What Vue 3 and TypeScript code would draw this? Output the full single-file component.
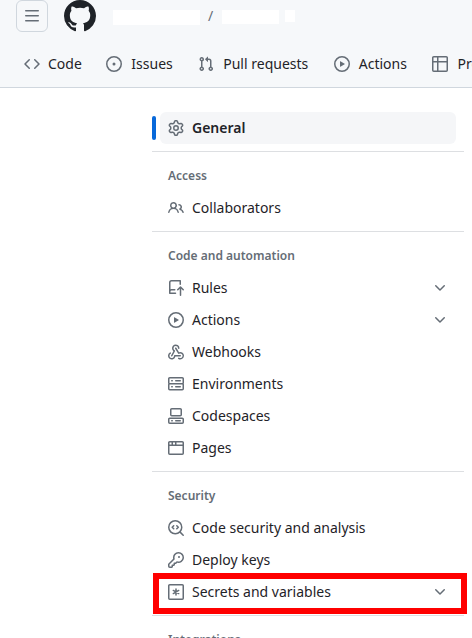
<script setup lang="ts">
interface Icon { fill?: string; stroke?: string }
interface Item { label: string; icon: string; expandable?: boolean; active?: boolean; marked?: boolean }
interface Group { title?: string; items: Item[] }

const icons: Record<string, Icon> = {
  menu: { fill: 'M1 2.75A.75.75 0 0 1 1.75 2h12.5a.75.75 0 0 1 0 1.5H1.75A.75.75 0 0 1 1 2.75Zm0 5A.75.75 0 0 1 1.75 7h12.5a.75.75 0 0 1 0 1.5H1.75A.75.75 0 0 1 1 7.75ZM1.75 12h12.5a.75.75 0 0 1 0 1.5H1.75a.75.75 0 0 1 0-1.5Z' },
  logo: { fill: 'M8 0c4.42 0 8 3.58 8 8a8.013 8.013 0 0 1-5.45 7.59c-.4.08-.55-.17-.55-.38 0-.27.01-1.13.01-2.2 0-.75-.25-1.23-.54-1.48 1.78-.2 3.65-.88 3.65-3.95 0-.88-.31-1.59-.82-2.15.08-.2.36-1.02-.08-2.12 0 0-.67-.22-2.2.82-.64-.18-1.32-.27-2-.27-.68 0-1.36.09-2 .27-1.53-1.03-2.2-.82-2.2-.82-.44 1.1-.16 1.92-.08 2.12-.51.56-.82 1.28-.82 2.15 0 3.06 1.86 3.75 3.64 3.95-.23.2-.44.55-.51 1.07-.46.21-1.61.55-2.33-.66-.15-.24-.6-.83-1.23-.82-.67.01-.27.38.01.53.34.19.73.9.82 1.13.16.45.68 1.31 2.69.94 0 .67.01 1.3.01 1.49 0 .21-.15.45-.55.38A7.995 7.995 0 0 1 0 8c0-4.42 3.58-8 8-8Z' },
  code: { fill: 'm11.28 3.22 4.25 4.25a.75.75 0 0 1 0 1.06l-4.25 4.25a.749.749 0 0 1-1.275-.326.749.749 0 0 1 .215-.734L13.94 8l-3.72-3.72a.749.749 0 0 1 .326-1.275.749.749 0 0 1 .734.215Zm-6.56 0a.751.751 0 0 1 1.042.018.751.751 0 0 1 .018 1.042L2.06 8l3.72 3.72a.749.749 0 0 1-.326 1.275.749.749 0 0 1-.734-.215L.47 8.53a.75.75 0 0 1 0-1.06Z' },
  issue: { fill: 'M8 9.5a1.5 1.5 0 1 0 0-3 1.5 1.5 0 0 0 0 3Z M8 0a8 8 0 1 1 0 16A8 8 0 0 1 8 0ZM1.5 8a6.5 6.5 0 1 0 13 0 6.5 6.5 0 0 0-13 0Z' },
  pull: { fill: 'M1.5 3.25a2.25 2.25 0 1 1 3 2.122v5.256a2.251 2.251 0 1 1-1.5 0V5.372A2.25 2.25 0 0 1 1.5 3.25Zm5.677-.177L9.573.677A.25.25 0 0 1 10 .854V2.5h1A2.5 2.5 0 0 1 13.5 5v5.628a2.251 2.251 0 1 1-1.5 0V5a1 1 0 0 0-1-1h-1v1.646a.25.25 0 0 1-.427.177L7.177 3.427a.25.25 0 0 1 0-.354ZM3.75 2.5a.75.75 0 1 0 0 1.5.75.75 0 0 0 0-1.5Zm0 9.5a.75.75 0 1 0 0 1.5.75.75 0 0 0 0-1.5Zm8.25.75a.75.75 0 1 0 1.5 0 .75.75 0 0 0-1.5 0Z' },
  play: { fill: 'M8 0a8 8 0 1 1 0 16A8 8 0 0 1 8 0ZM1.5 8a6.5 6.5 0 1 0 13 0 6.5 6.5 0 0 0-13 0Zm4.879-2.773 4.264 2.559a.25.25 0 0 1 0 .428l-4.264 2.559A.25.25 0 0 1 6 10.559V5.442a.25.25 0 0 1 .379-.215Z' },
  table: { fill: 'M0 1.75C0 .784.784 0 1.75 0h12.5C15.216 0 16 .784 16 1.75v12.5A1.75 1.75 0 0 1 14.25 16H1.75A1.75 1.75 0 0 1 0 14.25ZM6.5 6.5v8h7.75a.25.25 0 0 0 .25-.25V6.5Zm8-1.5V1.75a.25.25 0 0 0-.25-.25H6.5V5Zm-13 1.5v7.75c0 .138.112.25.25.25H5v-8ZM5 5V1.5H1.75a.25.25 0 0 0-.25.25V5Z' },
  gear: { fill: 'M8 0a8.2 8.2 0 0 1 .701.031C9.444.095 9.99.645 10.16 1.29l.288 1.107c.018.066.079.158.212.224.231.114.454.243.668.386.123.082.233.09.299.071l1.103-.303c.644-.176 1.392.021 1.82.63.27.385.506.792.704 1.218.315.675.111 1.422-.364 1.891l-.814.806c-.049.048-.098.147-.088.294.016.257.016.515 0 .772-.01.147.038.246.088.294l.814.806c.475.469.679 1.216.364 1.891a7.977 7.977 0 0 1-.704 1.217c-.428.61-1.176.807-1.82.63l-1.102-.302c-.067-.019-.177-.011-.3.071a5.909 5.909 0 0 1-.668.386c-.133.066-.194.158-.211.224l-.29 1.106c-.168.646-.715 1.196-1.458 1.26a8.006 8.006 0 0 1-1.402 0c-.743-.064-1.289-.614-1.458-1.26l-.289-1.106c-.018-.066-.079-.158-.212-.224a5.738 5.738 0 0 1-.668-.386c-.123-.082-.233-.09-.299-.071l-1.103.303c-.644.176-1.392-.021-1.82-.63a8.12 8.12 0 0 1-.704-1.218c-.315-.675-.111-1.422.363-1.891l.815-.806c.05-.048.098-.147.088-.294a6.214 6.214 0 0 1 0-.772c.01-.147-.038-.246-.088-.294l-.815-.806C.635 6.045.431 5.298.746 4.623a7.92 7.92 0 0 1 .704-1.217c.428-.61 1.176-.807 1.82-.63l1.102.302c.067.019.177.011.3-.071.214-.143.437-.272.668-.386.133-.066.194-.158.211-.224l.29-1.106C6.009.645 6.556.095 7.299.03 7.53.01 7.764 0 8 0Zm-.571 1.525c-.036.003-.108.036-.137.146l-.289 1.105c-.147.561-.549.967-.998 1.189-.173.086-.34.183-.5.29-.417.278-.97.423-1.529.27l-1.103-.303c-.109-.03-.175.016-.195.045-.22.312-.412.644-.573.99-.014.031-.021.11.059.19l.815.806c.411.406.562.957.53 1.456a4.709 4.709 0 0 0 0 .582c.032.499-.119 1.05-.53 1.456l-.815.806c-.081.08-.073.159-.059.19.162.346.353.677.573.989.02.03.085.076.195.046l1.102-.303c.56-.153 1.113-.008 1.53.27.161.107.328.204.501.29.447.222.85.629.997 1.189l.289 1.105c.029.109.101.143.137.146a6.6 6.6 0 0 0 1.142 0c.036-.003.108-.036.137-.146l.289-1.105c.147-.561.549-.967.998-1.189.173-.086.34-.183.5-.29.417-.278.97-.423 1.529-.27l1.103.303c.109.029.175-.016.195-.045.22-.313.411-.644.573-.99.014-.031.021-.11-.059-.19l-.815-.806c-.411-.406-.562-.957-.53-1.456a4.709 4.709 0 0 0 0-.582c-.032-.499.119-1.05.53-1.456l.815-.806c.081-.08.073-.159.059-.19a6.464 6.464 0 0 0-.573-.989c-.02-.03-.085-.076-.195-.046l-1.102.303c-.56.153-1.113.008-1.53-.27a4.44 4.44 0 0 0-.501-.29c-.447-.222-.85-.629-.997-1.189l-.289-1.105c-.029-.11-.101-.143-.137-.146a6.6 6.6 0 0 0-1.142 0ZM11 8a3 3 0 1 1-6 0 3 3 0 0 1 6 0ZM9.5 8a1.5 1.5 0 1 0-3.001.001A1.5 1.5 0 0 0 9.5 8Z' },
  people: { fill: 'M2 5.5a3.5 3.5 0 1 1 5.898 2.549 5.508 5.508 0 0 1 3.034 4.084.75.75 0 1 1-1.482.235 4 4 0 0 0-7.9 0 .75.75 0 0 1-1.482-.236A5.507 5.507 0 0 1 3.102 8.05 3.493 3.493 0 0 1 2 5.5ZM11 4a3.001 3.001 0 0 1 2.22 5.018 5.01 5.01 0 0 1 2.56 3.012.749.749 0 0 1-.885.954.752.752 0 0 1-.549-.514 3.507 3.507 0 0 0-2.522-2.372.75.75 0 0 1-.574-.73v-.352a.75.75 0 0 1 .416-.672A1.5 1.5 0 0 0 11 5.5.75.75 0 0 1 11 4Zm-5.5-.5a2 2 0 1 0-.001 3.999A2 2 0 0 0 5.5 3.5Z' },
  rules: { fill: 'M1 2.5A2.5 2.5 0 0 1 3.5 0h8.75a.75.75 0 0 1 .75.75v3.5a.75.75 0 0 1-1.5 0V1.5h-8a1 1 0 0 0-1 1v6.708A2.493 2.493 0 0 1 3.5 9h3.25a.75.75 0 0 1 0 1.5H3.5a1 1 0 0 0-1 1v1h5a.75.75 0 0 1 0 1.5H1.75a.75.75 0 0 1-.75-.75Zm13.73 7.79-1.48-1.47v6.43a.75.75 0 0 1-1.5 0V8.82l-1.47 1.47a.75.75 0 0 1-1.06-1.06l2.75-2.75a.75.75 0 0 1 1.06 0l2.75 2.75a.75.75 0 0 1-1.05 1.06Z' },
  webhook: { fill: 'M5.5 4.25a2.25 2.25 0 0 1 4.5 0 .75.75 0 0 0 1.5 0 3.75 3.75 0 1 0-6.14 2.889l-2.272 4.258a.75.75 0 0 0 1.324.706L7 7.25a.75.75 0 0 0-.309-1.015A2.25 2.25 0 0 1 5.5 4.25Z M7.364 3.607a.75.75 0 0 1 1.03.257l2.608 4.349a3.75 3.75 0 1 1-.628 6.785.75.75 0 0 1 .752-1.299 2.25 2.25 0 1 0-.033-3.88.75.75 0 0 1-1.03-.256L7.107 4.636a.75.75 0 0 1 .257-1.03Z M2.9 8.776A.75.75 0 0 1 2.625 9.8 2.25 2.25 0 1 0 6 11.75a.75.75 0 0 1 .75-.751h5.5a.75.75 0 0 1 0 1.5H7.425a3.751 3.751 0 1 1-5.55-3.998.75.75 0 0 1 1.024.274Z' },
  server: { fill: 'M1.75 1h12.5c.966 0 1.75.784 1.75 1.75v4c0 .372-.116.717-.314 1 .198.283.314.628.314 1v4a1.75 1.75 0 0 1-1.75 1.75H1.75A1.75 1.75 0 0 1 0 12.75v-4c0-.358.109-.707.314-1a1.739 1.739 0 0 1-.314-1v-4C0 1.784.784 1 1.75 1ZM1.5 2.75v4c0 .138.112.25.25.25h12.5a.25.25 0 0 0 .25-.25v-4a.25.25 0 0 0-.25-.25H1.75a.25.25 0 0 0-.25.25Zm.25 5.75a.25.25 0 0 0-.25.25v4c0 .138.112.25.25.25h12.5a.25.25 0 0 0 .25-.25v-4a.25.25 0 0 0-.25-.25ZM7 4.75A.75.75 0 0 1 7.75 4h4.5a.75.75 0 0 1 0 1.5h-4.5A.75.75 0 0 1 7 4.75ZM7.75 10h4.5a.75.75 0 0 1 0 1.5h-4.5a.75.75 0 0 1 0-1.5ZM3 4.75A.75.75 0 0 1 3.75 4h.5a.75.75 0 0 1 0 1.5h-.5A.75.75 0 0 1 3 4.75ZM3.75 10h.5a.75.75 0 0 1 0 1.5h-.5a.75.75 0 0 1 0-1.5Z' },
  codespaces: { fill: 'M0 11.25c0-.966.784-1.75 1.75-1.75h12.5c.966 0 1.75.784 1.75 1.75v3A1.75 1.75 0 0 1 14.25 16H1.75A1.75 1.75 0 0 1 0 14.25Zm2-9.5C2 .784 2.784 0 3.75 0h8.5C13.216 0 14 .784 14 1.75v5a1.75 1.75 0 0 1-1.75 1.75h-8.5A1.75 1.75 0 0 1 2 6.75Zm1.75-.25a.25.25 0 0 0-.25.25v5c0 .138.112.25.25.25h8.5a.25.25 0 0 0 .25-.25v-5a.25.25 0 0 0-.25-.25Zm-2 9.5a.25.25 0 0 0-.25.25v3c0 .138.112.25.25.25h12.5a.25.25 0 0 0 .25-.25v-3a.25.25 0 0 0-.25-.25ZM7 12.75a.75.75 0 0 1 .75-.75h4.5a.75.75 0 0 1 0 1.5h-4.5a.75.75 0 0 1-.75-.75Zm-4 0a.75.75 0 0 1 .75-.75h.5a.75.75 0 0 1 0 1.5h-.5a.75.75 0 0 1-.75-.75Z' },
  browser: { fill: 'M0 2.75C0 1.784.784 1 1.75 1h12.5c.966 0 1.75.784 1.75 1.75v10.5A1.75 1.75 0 0 1 14.25 15H1.75A1.75 1.75 0 0 1 0 13.25ZM14.5 6h-13v7.25c0 .138.112.25.25.25h12.5a.25.25 0 0 0 .25-.25Zm-6-3.5v2h6V2.75a.25.25 0 0 0-.25-.25ZM5 2.5v2h2v-2Zm-3.25 0a.25.25 0 0 0-.25.25V4.5h2v-2Z' },
  codescan: { stroke: 'M12.1 12.1 15.2 15.2M13.75 7.25a6.5 6.5 0 1 1-13 0 6.5 6.5 0 0 1 13 0ZM5.7 5.7 4.2 7.25 5.7 8.8M8.8 5.7l1.5 1.55L8.8 8.8' },
  key: { fill: 'M10.5 0a5.499 5.499 0 1 1-1.288 10.848l-.932.932a.749.749 0 0 1-.53.22H7v.75a.749.749 0 0 1-.22.53l-.5.5a.749.749 0 0 1-.53.22H5v.75a.749.749 0 0 1-.22.53l-.5.5a.749.749 0 0 1-.53.22h-2A1.75 1.75 0 0 1 0 14.25v-2c0-.199.079-.389.22-.53l4.932-4.932A5.5 5.5 0 0 1 10.5 0Zm-4 5.5c-.001.431.069.86.205 1.269a.75.75 0 0 1-.181.768L1.5 12.56v1.69c0 .138.112.25.25.25h1.69l.06-.06v-1.19a.75.75 0 0 1 .75-.75h1.19l.06-.06v-1.19a.75.75 0 0 1 .75-.75h1.19l1.023-1.025a.75.75 0 0 1 .768-.18A4 4 0 1 0 6.5 5.5ZM11 6a1 1 0 1 1 0-2 1 1 0 0 1 0 2Z' },
  secret: { stroke: 'M1.75.75h12.5a1 1 0 0 1 1 1v12.5a1 1 0 0 1-1 1H1.75a1 1 0 0 1-1-1V1.75a1 1 0 0 1 1-1ZM8 5v6M5.3 6.45l5.4 3.1M5.3 9.55l5.4-3.1' },
  chevron: { fill: 'M12.78 5.22a.749.749 0 0 1 0 1.06l-4.25 4.25a.749.749 0 0 1-1.06 0L3.22 6.28a.749.749 0 1 1 1.06-1.06L8 8.939l3.72-3.719a.749.749 0 0 1 1.06 0Z' },
}

const tabs: Item[] = [
  { label: 'Code', icon: 'code' },
  { label: 'Issues', icon: 'issue' },
  { label: 'Pull requests', icon: 'pull' },
  { label: 'Actions', icon: 'play' },
  { label: 'Projects', icon: 'table' },
]

const groups: Group[] = [
  { items: [{ label: 'General', icon: 'gear', active: true }] },
  { title: 'Access', items: [{ label: 'Collaborators', icon: 'people' }] },
  {
    title: 'Code and automation',
    items: [
      { label: 'Rules', icon: 'rules', expandable: true },
      { label: 'Actions', icon: 'play', expandable: true },
      { label: 'Webhooks', icon: 'webhook' },
      { label: 'Environments', icon: 'server' },
      { label: 'Codespaces', icon: 'codespaces' },
      { label: 'Pages', icon: 'browser' },
    ],
  },
  {
    title: 'Security',
    items: [
      { label: 'Code security and analysis', icon: 'codescan' },
      { label: 'Deploy keys', icon: 'key' },
      { label: 'Secrets and variables', icon: 'secret', expandable: true, marked: true },
    ],
  },
  { title: 'Integrations', items: [] },
]
</script>

<template>
  <div class="page">
    <header class="header">
      <div class="topbar">
        <button class="menu" aria-label="Menu">
          <svg class="icon" viewBox="0 0 16 16"><path :d="icons.menu.fill" /></svg>
        </button>
        <svg class="logo" viewBox="0 0 16 16"><path :d="icons.logo.fill" /></svg>
        <div class="crumbs">
          <span class="blank owner"></span>
          <span class="slash">/</span>
          <span class="blank repo"></span>
          <span class="blank badge"></span>
        </div>
      </div>
      <nav class="tabs">
        <a v-for="tab in tabs" :key="tab.label" class="tab">
          <svg class="icon" viewBox="0 0 16 16"><path :d="icons[tab.icon].fill" /></svg>
          <span>{{ tab.label }}</span>
        </a>
      </nav>
    </header>
    <aside class="sidebar">
      <section v-for="(group, i) in groups" :key="i" class="group">
        <h3 v-if="group.title" class="title">{{ group.title }}</h3>
        <a v-for="item in group.items" :key="item.label" class="item" :class="{ active: item.active, marked: item.marked }">
          <svg class="icon" viewBox="0 0 16 16">
            <path v-if="icons[item.icon].fill" :d="icons[item.icon].fill" />
            <path v-else class="line" :d="icons[item.icon].stroke" />
          </svg>
          <span class="label">{{ item.label }}</span>
          <svg v-if="item.expandable" class="icon" viewBox="0 0 16 16"><path :d="icons.chevron.fill" /></svg>
        </a>
      </section>
    </aside>
  </div>
</template>

<style>
body { background: #fff; }
</style>

<style scoped>
.page {
  box-sizing: border-box;
  height: 638px;
  overflow: hidden;
  background: #fff;
  color: #1f2328;
  font: 14px/20px "Noto Sans", sans-serif;
}
.header {
  box-sizing: border-box;
  height: 88px;
  background: #f6f8fa;
  border-bottom: 1px solid #d0d7de;
}
.topbar { display: flex; height: 40px; padding-left: 16px; align-items: flex-start; }
.menu {
  box-sizing: border-box;
  display: grid;
  place-items: center;
  width: 32px;
  height: 32px;
  padding: 0;
  border: 1px solid #d0d7de;
  border-radius: 6px;
  background: transparent;
}
.logo { width: 32px; height: 32px; margin-left: 16px; fill: #1f2328; }
.crumbs { display: flex; align-items: flex-start; padding: 10px 0 0 17px; }
.blank { background: #fff; }
.owner { width: 87px; height: 15px; }
.slash { width: 6px; margin: -4px 8px 0; color: #656d76; }
.repo { width: 57px; height: 14px; }
.badge { width: 10px; height: 12px; margin-left: 6px; }
.tabs { display: flex; gap: 25.5px; padding-left: 24px; height: 48px; }
.tab { display: flex; flex: none; align-items: center; gap: 9px; }
.tab:first-child { gap: 8px; margin-right: -1px; }
.icon { display: block; flex: none; width: 16px; height: 16px; fill: #656d76; }
.line { fill: none; stroke: #656d76; stroke-width: 1.5; stroke-linecap: round; stroke-linejoin: round; }
.sidebar { width: 312px; margin: 24px 0 0 152px; }
.group + .group { margin-top: 7px; padding-top: 8px; border-top: 1px solid #dddfe2; }
.title { height: 32px; margin: 0; padding-left: 16px; color: #656d76; font-size: 12px; font-weight: 600; line-height: 31px; }
.item {
  position: relative;
  display: flex;
  align-items: center;
  gap: 8px;
  height: 32px;
  margin: 0 8px;
  padding: 0 8px;
  border-radius: 6px;
}
.label { flex: 1; }
.active { background: #f5f6f8; font-weight: 600; }
.active::before {
  content: "";
  position: absolute;
  top: 4px;
  left: -8px;
  width: 4px;
  height: 24px;
  border-radius: 6px;
  background: #0969da;
}
.marked::after {
  content: "";
  position: absolute;
  box-sizing: border-box;
  top: -3px;
  left: -7px;
  width: 314px;
  height: 41px;
  border: 6px solid #f00;
}
</style>
